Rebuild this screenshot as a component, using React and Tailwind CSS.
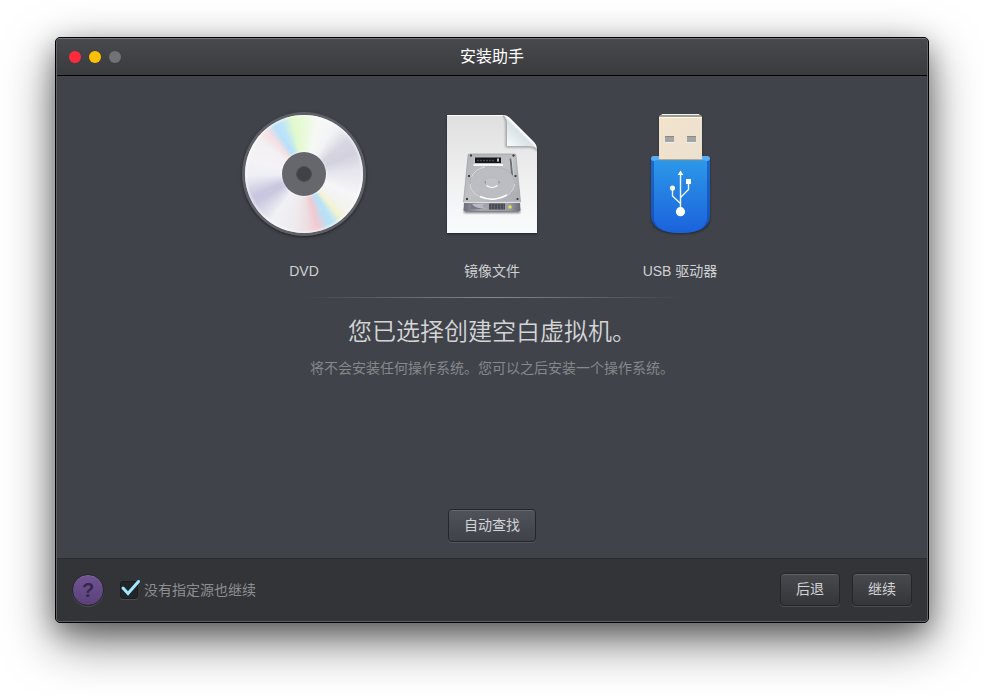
const SOURCES = [
  { id: 'dvd', label: 'DVD', Icon: DiscIcon },
  { id: 'image', label: '镜像文件', Icon: ImageFileIcon },
  { id: 'usb', label: 'USB 驱动器', Icon: UsbIcon },
];

const SCREWS = [
  [43, 45.5],
  [85.500, 45.5],
  [41, 66],
  [87.500, 66],
  [39, 89],
  [89.500, 89],
];

function DiscIcon() {
  return (
    <span className="grid size-32 place-items-center">
      <span className="grid size-31 place-items-center rounded-full bg-[#5f6067] shadow-[0_1px_3px_rgba(0,0,0,0.5)]">
        <span className="grid size-[118px] place-items-center rounded-full bg-[conic-gradient(#e9fadb_0deg,#f6f8f4_16deg,#f3f3f6_34deg,#d6d5e0_54deg,#d2d1dd_68deg,#e6e5ed_86deg,#f6f5f8_112deg,#f3f3f0_130deg,#f3f3d0_140deg,#b9e3f7_149deg,#b9e0f5_154deg,#f3c9d0_166deg,#ecdfe2_177deg,#eeeaee_190deg,#f1f1f5_215deg,#c9c8e0_239deg,#c8c7df_247deg,#eeeef6_268deg,#f5f3f7_285deg,#f2f0f2_308deg,#f5dfe2_319deg,#b9e0fa_329deg,#bde5fa_336deg,#e2f9cb_348deg,#e9fadb_360deg)] shadow-[inset_0_0_3px_1px_rgba(255,255,255,0.8)]">
          <span className="grid size-11 place-items-center rounded-full bg-[#66676d] shadow-[0_0_2px_1px_rgba(255,255,255,0.5)]">
            <span className="size-4 rounded-full border border-[#505158] bg-[#404247]" />
          </span>
        </span>
      </span>
    </span>
  );
}

function ImageFileIcon() {
  return (
    <svg viewBox="0 0 128 128" className="size-32" aria-hidden="true">
      <defs>
        <linearGradient id="sheet" x1="0" y1="0" x2="0" y2="1">
          <stop offset="0" stopColor="#dfdfdf" />
          <stop offset="0.5" stopColor="#eeeeee" />
          <stop offset="1" stopColor="#f9fcfd" />
        </linearGradient>
        <linearGradient id="fold" gradientUnits="userSpaceOnUse" x1="79" y1="36" x2="94" y2="21">
          <stop offset="0" stopColor="#f8fcfc" />
          <stop offset="0.5" stopColor="#e4ecee" />
          <stop offset="0.85" stopColor="#d8e1e4" />
          <stop offset="1" stopColor="#ffffff" />
        </linearGradient>
        <linearGradient id="lid" x1="0" y1="0" x2="1" y2="1">
          <stop offset="0" stopColor="#b2b3b7" />
          <stop offset="0.5" stopColor="#c0c1c5" />
          <stop offset="1" stopColor="#aaabb0" />
        </linearGradient>
        <linearGradient id="front" x1="0" y1="0" x2="1" y2="0">
          <stop offset="0" stopColor="#6c6f7b" />
          <stop offset="0.3" stopColor="#a4a7b1" />
          <stop offset="0.8" stopColor="#9a9da7" />
          <stop offset="1" stopColor="#686b76" />
        </linearGradient>
        <clipPath id="sheetClip">
          <path d="M19 5H75Q79 5 82 9L106 33Q109 36 109 39V123H19Z" />
        </clipPath>
        <filter id="soft" x="-20%" y="-50%" width="140%" height="200%">
          <feGaussianBlur stdDeviation="1.2" />
        </filter>
      </defs>
      <path d="M19 6H78L109 38V124H19Z" fill="#000" opacity="0.45" filter="url(#soft)" />
      <path d="M19 5H75Q79 5 82 9L106 33Q109 36 109 39V123H19Z" fill="url(#sheet)" />
      <g clipPath="url(#sheetClip)">
        <path d="M74 4Q77 8 77.500 14V37.500H101Q107 38 110 42V20L84 2Z" fill="#000" opacity="0.3" filter="url(#soft)" />
      </g>
      <path d="M75 5Q79 5 82 8L106 32Q109 35 109 39Q106 36 100 36H79V14Q79 8 75 5Z" fill="url(#fold)" />
      <path d="M19 5.500H75" stroke="#fff" />

      <path d="M36 99H92V103H36Z" fill="#000" opacity="0.5" filter="url(#soft)" />
      <path d="M41 44H87Q88 44 88 46L92.500 92H35.500L40 46Q40 44 41 44Z" fill="url(#lid)" stroke="#9a9ba0" strokeWidth="0.700" />
      <path d="M36 92L35.500 99.500Q35.500 101 37 101H91Q92.500 101 92.500 99.500L92 92Z" fill="url(#front)" />
      <path d="M35.500 92.300H92.500" stroke="#e0e1e5" strokeWidth="1.200" />
      <path d="M45 47H75V56H45Z" fill="#bebfc4" />
      <rect x="47" y="47.500" width="26" height="5.500" fill="#15161a" />
      <path d="M49 50.500H66" stroke="#47494e" strokeWidth="1.500" strokeDasharray="2 1" />
      <rect x="69" y="48.500" width="2" height="3" fill="#c4c4c4" />
      <path d="M45.500 55H75" stroke="#f6f6f7" strokeWidth="1.800" />
      <path d="M82.500 48.500L84.500 68" stroke="#6b6d73" strokeWidth="1.800" />
      <path d="M84 48L86 68" stroke="#d9dade" strokeWidth="0.700" />
      <ellipse cx="64.300" cy="72.700" rx="22.500" ry="16.200" fill="#bcbdc2" stroke="#acadb3" strokeWidth="0.700" />
      <path d="M42 74C42.500 83 52 89 64 89S86 83 86.500 74" fill="none" stroke="#d9dadf" />
      <path d="M52 86.500Q58 89.300 64 89.300T79 85" fill="none" stroke="#fff" strokeWidth="1.400" />
      <path d="M43.500 67Q47 59 57 57" fill="none" stroke="#e2e3e6" strokeWidth="0.900" />
      <ellipse cx="64" cy="72.300" rx="7" ry="5" fill="#c1c2c7" stroke="#b2b3b8" strokeWidth="0.600" />
      <path d="M58.500 75.500Q64 79.500 69.500 75.500" fill="none" stroke="#fff" strokeWidth="1.200" />
      <path d="M57.300 71V73.500M71 71V73.500" stroke="#85868d" strokeWidth="0.900" />
      {SCREWS.map(([cx, cy]) => (
        <g key={`${cx}-${cy}`}>
          <circle cx={cx} cy={cy} r="1.700" fill="#cdced2" />
          <circle cx={cx} cy={cy} r="1.200" fill="#3a3b41" />
        </g>
      ))}
      <path d="M43 94H57Q51 95 58 99H43Z" fill="#b9bbc3" />
      <path d="M43 94V99H57Q46 98 44 94Z" fill="#777a86" />
      <rect x="61" y="93.500" width="16" height="6" fill="#4a4c56" />
      <path d="M63.500 94V99M66.500 94V99M69.500 94V99M72.500 94V99M75.500 94V99" stroke="#6f727d" strokeWidth="0.600" />
      <circle cx="82" cy="97" r="2" fill="#b7bb7a" />
      <circle cx="82" cy="97" r="1.300" fill="#e3ea3c" />
    </svg>
  );
}

function UsbIcon() {
  return (
    <svg viewBox="0 0 128 128" className="size-32" aria-hidden="true">
      <defs>
        <linearGradient id="body" x1="0" y1="0" x2="0" y2="1">
          <stop offset="0" stopColor="#2c98e8" />
          <stop offset="1" stopColor="#1b62dc" />
        </linearGradient>
        <linearGradient id="bodyEdge" x1="0" y1="0" x2="0" y2="1">
          <stop offset="0" stopColor="#1a69cd" />
          <stop offset="1" stopColor="#1550bd" />
        </linearGradient>
        <linearGradient id="metal" x1="0" y1="0" x2="1" y2="1">
          <stop offset="0" stopColor="#f3e3cb" />
          <stop offset="1" stopColor="#ebe0d0" />
        </linearGradient>
        <filter id="usbSoft" x="-20%" y="-20%" width="140%" height="140%">
          <feGaussianBlur stdDeviation="1.200" />
        </filter>
      </defs>
      <path d="M43 6H86V47H94V108Q94 124 64.500 124T35 108V47H43Z" fill="#000" opacity="0.4" filter="url(#usbSoft)" />
      <path d="M35 48H94V106Q94 114 86 119Q79 123 64.500 123T43 119Q35 114 35 106Z" fill="url(#bodyEdge)" />
      <path d="M38 50H91V108Q91 115 84 119Q77 123 64.500 123T45 119Q38 115 38 108Z" fill="url(#body)" />
      <path d="M35 48.500Q35 46 37.500 46H91.500Q94 46 94 48.500Q94 50.500 91 51L87 50H42L38 51Q35 50.500 35 48.500Z" fill="#5aacf5" />
      <path d="M46 4H83L86 6V50H43V6Z" fill="#a09c91" />
      <path d="M46 4.500H83" stroke="#eaf5ee" />
      <rect x="43" y="7" width="43" height="42.500" fill="url(#metal)" />
      <path d="M43 7.500H86" stroke="#fff8ea" />
      <path d="M43 50H86" stroke="#8e8b84" strokeWidth="0.800" />
      <rect x="49" y="26" width="9" height="6" fill="#a5a4a5" />
      <rect x="71" y="26" width="9" height="6" fill="#a5a4a5" />
      <path d="M49 26.500H58M71 26.500H80" stroke="#8a898a" />
      <path d="M49 32.500H58M71 32.500H80" stroke="#e1f5f3" />
      <g fill="none" stroke="#f3f8ff" strokeWidth="1.400">
        <path d="M64.500 101V64" />
        <path d="M56.500 78V86L64.500 93.500" />
        <path d="M72.500 72V79.500L64.500 87.500" />
      </g>
      <g fill="#fff">
        <path d="M64.500 60.500L67.300 65H61.700Z" />
        <circle cx="56.500" cy="78" r="2.600" />
        <rect x="70" y="69" width="5" height="5" />
        <circle cx="64.500" cy="101.700" r="4.600" />
      </g>
    </svg>
  );
}

function PushButton({ children, className }) {
  return (
    <button
      type="button"
      className={`h-[33px] rounded border border-[#25262a] bg-linear-to-b pb-0.5 text-sm text-[#d2d3d5] ${className}`}
    >
      {children}
    </button>
  );
}

export default function App() {
  return (
    <div className="flex min-h-screen bg-white px-[55px] pt-[37px] pb-[73px] font-['Liberation_Sans','Noto_Sans_CJK_SC',sans-serif]">
      <div className="flex flex-1 rounded-[5px] border border-black bg-black shadow-[0_18px_50px_rgba(0,0,0,0.55),0_8px_24px_rgba(0,0,0,0.3)]">
        <div className="flex flex-1 flex-col overflow-hidden rounded-[4px] border border-[#5f6167] border-t-[#76787b] bg-[#40434a]">
          <header className="grid h-[37px] grid-cols-[1fr_auto_1fr] items-center border-b border-black bg-linear-to-b from-[#48494c] to-[#3a3b3e] px-3">
            <div className="flex gap-2">
              <button type="button" aria-label="关闭" className="size-3 rounded-full bg-[#ff2b3d]" />
              <button type="button" aria-label="最小化" className="size-3 rounded-full bg-[#ffc003]" />
              <button type="button" aria-label="缩放" disabled className="size-3 rounded-full bg-[#717276]" />
            </div>
            <h1 className="text-base text-white">安装助手</h1>
          </header>

          <main className="flex flex-1 flex-col items-center pt-[34px] pb-4">
            <div className="grid grid-cols-[188px_188px_188px]">
              {SOURCES.map(({ id, label, Icon }) => (
                <button key={id} type="button" className="flex flex-col items-center gap-[23px] text-sm text-[#d0d1d3]">
                  <Icon />
                  <span>{label}</span>
                </button>
              ))}
            </div>
            <div className="mt-4 h-px w-[380px] bg-linear-to-r from-transparent via-[#858a8b] to-transparent" />
            <h2 className="mt-[18px] text-2xl font-[350] text-[#d4d5d7]">您已选择创建空白虚拟机。</h2>
            <p className="mt-2.5 text-sm text-[#86888c]">将不会安装任何操作系统。您可以之后安装一个操作系统。</p>
            <PushButton className="mt-auto w-[88px] from-[#50535a] to-[#3f4248] shadow-[inset_0_1px_0_#666970,0_1px_0_#54575e]">
              自动查找
            </PushButton>
          </main>

          <footer className="flex items-center border-t border-[#2b2c2e] bg-[#333437] px-[15px] pt-3.5 pb-[15px]">
            <button
              type="button"
              aria-label="帮助"
              className="size-8 rounded-full border border-[#29262f] bg-linear-to-b from-[#705493] to-[#5a4179] text-xl font-bold text-[#35264d] shadow-[inset_0_1px_0_#806a9e,0_1px_0_#4b4c50]"
            >
              ?
            </button>
            <label className="ml-4 flex items-center gap-1.5 text-sm text-[#8d8e91]">
              <span className="grid">
                <input
                  type="checkbox"
                  defaultChecked
                  className="peer col-start-1 row-start-1 size-[18px] appearance-none rounded-[3px] border border-[#1c1d1f] bg-[#232427] shadow-[0_1px_0_#4b4c50]"
                />
                <svg
                  viewBox="0 0 18 18"
                  className="pointer-events-none invisible col-start-1 row-start-1 size-[18px] overflow-visible peer-checked:visible"
                  aria-hidden="true"
                >
                  <path d="M3 7L8 12.500L18.500 0.500" fill="none" stroke="#9fe6ff" strokeWidth="3" strokeLinecap="round" />
                </svg>
              </span>
              <span>没有指定源也继续</span>
            </label>
            <div className="ml-auto flex gap-3">
              <PushButton className="w-15 from-[#48494d] to-[#35363a] shadow-[inset_0_1px_0_#606165,0_1px_0_#4b4c50]">
                后退
              </PushButton>
              <PushButton className="w-15 from-[#48494d] to-[#35363a] shadow-[inset_0_1px_0_#606165,0_1px_0_#4b4c50]">
                继续
              </PushButton>
            </div>
          </footer>
        </div>
      </div>
    </div>
  );
}
